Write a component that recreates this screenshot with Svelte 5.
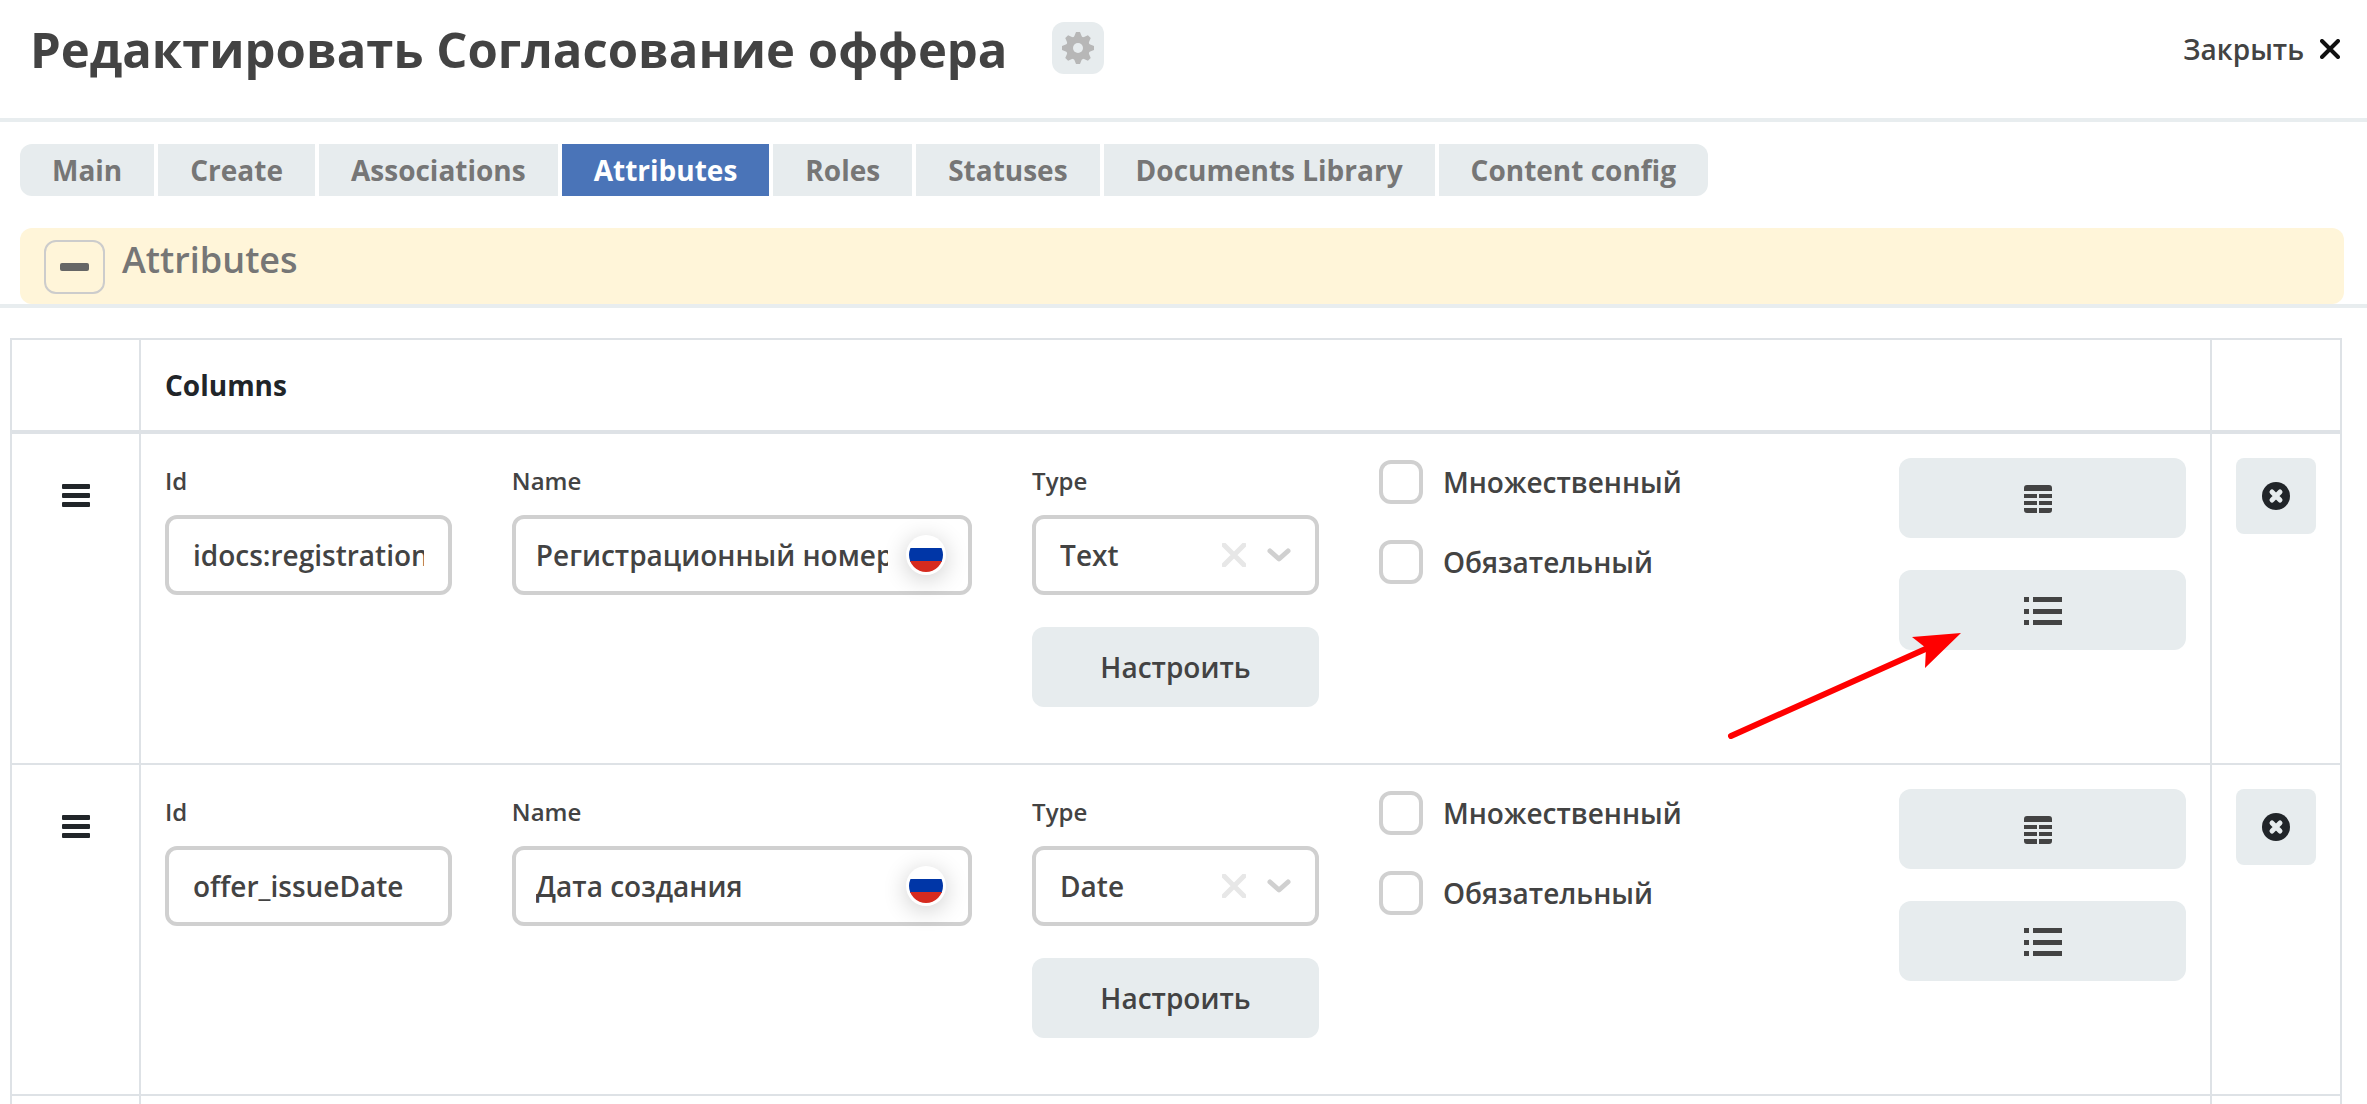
<script>
  const tabs = ['Main', 'Create', 'Associations', 'Attributes', 'Roles', 'Statuses', 'Documents Library', 'Content config'];
  let active = $state('Attributes');
  let rows = $state([
    { id: 'idocs:registrationNumber', name: 'Регистрационный номер', type: 'Text', hint: true },
    { id: 'offer_issueDate', name: 'Дата создания', type: 'Date', hint: false }
  ]);
</script>

<div class="page">
  <header>
    <h1>Редактировать Согласование оффера</h1>
    <button class="gear" aria-label="Settings">
      <svg width="32" height="32" viewBox="-16 -16 32 32" fill="#b7b7b7">
        <circle r="12" />
        {#each [0, 45, 90, 135] as angle}
          <path d="M-2 -16h4l2 5v22l-2 5h-4l-2 -5v-22z" transform="rotate({angle})" />
        {/each}
        <circle r="5" fill="#e7ecee" />
      </svg>
    </button>
    <button class="close">
      Закрыть
      <svg width="20" height="20" viewBox="0 0 20 20"><path d="M2 2l16 16M18 2L2 18" stroke="#111" stroke-width="4" stroke-linecap="round" /></svg>
    </button>
  </header>

  <nav>
    {#each tabs as tab}
      <button class="tab" class:active={tab === active} onclick={() => (active = tab)}>{tab}</button>
    {/each}
  </nav>

  <section class="panel">
    <div class="panel-bar">
      <button class="collapse" aria-label="Collapse">
        <svg width="29" height="8" viewBox="0 0 29 8"><rect width="29" height="8" rx="2" fill="#666" /></svg>
      </button>
      <h2>Attributes</h2>
    </div>
  </section>

  <div class="table-wrap">
    <table>
      <colgroup><col class="edge-left" /><col /><col class="edge-right" /></colgroup>
      <thead>
        <tr><th></th><th>Columns</th><th></th></tr>
      </thead>
      <tbody>
        {#each rows as row, i}
          <tr>
            <td>
              <div class="drag">
                <svg width="28" height="23" viewBox="0 0 28 23" fill="#212529">
                  <rect width="28" height="5" rx="1" /><rect y="9" width="28" height="5" rx="1" /><rect y="18" width="28" height="5" rx="1" />
                </svg>
              </div>
            </td>
            <td>
              <div class="fields">
                <div class="narrow">
                  <label class="caption" for="id-{i}">Id</label>
                  <input class="box" id="id-{i}" type="text" bind:value={row.id} />
                </div>
                <div class="wide">
                  <label class="caption" for="name-{i}">Name</label>
                  <div class="control">
                    <input class="box localized" id="name-{i}" type="text" bind:value={row.name} />
                    <button class="flag" aria-label="Русский">
                      <svg width="34" height="34" viewBox="0 0 34 34">
                        <clipPath id="round-{i}"><circle cx="17" cy="17" r="17" /></clipPath>
                        <g clip-path="url(#round-{i})">
                          <rect width="34" height="10" fill="#fff" /><rect y="10" width="34" height="14" fill="#0036a7" /><rect y="23" width="34" height="11" fill="#d62b1f" />
                        </g>
                      </svg>
                    </button>
                  </div>
                </div>
                <div class="narrow">
                  <label class="caption" for="type-{i}">Type</label>
                  <div class="control">
                    <select class="box" id="type-{i}" bind:value={row.type}>
                      <option>Text</option>
                      <option>Date</option>
                    </select>
                    <div class="indicators">
                      <button class="clear" aria-label="Clear">
                        <svg width="24" height="24" viewBox="0 0 24 24"><path d="M2 2l20 20M22 2L2 22" stroke="#e7e7e7" stroke-width="5" stroke-linecap="round" /></svg>
                      </button>
                      <svg width="24" height="14" viewBox="0 0 24 14"><path d="M3 3l9 8L21 3" fill="none" stroke="#d0d0d0" stroke-width="5" stroke-linecap="round" stroke-linejoin="round" /></svg>
                    </div>
                  </div>
                  <button class="action configure">Настроить</button>
                </div>
                <div class="wide checks">
                  <label><input type="checkbox" />Множественный</label>
                  <label><input type="checkbox" />Обязательный</label>
                </div>
                <div class="narrow actions">
                  <button class="action icon" aria-label="Table">
                    <svg width="38" height="28" viewBox="0 0 38 28" fill="#434343">
                      <path d="M3 0h22a3 3 0 0 1 3 3v3H0V3a3 3 0 0 1 3-3zM0 9h13v4H0zM15 9h13v4H15zM0 16h13v4H0zM15 16h13v4H15zM0 23h13v5H3a3 3 0 0 1-3-3zM15 23h13v2a3 3 0 0 1-3 3H15z" />
                    </svg>
                  </button>
                  <div class="control">
                    <button class="action icon" aria-label="List">
                      <svg width="38" height="28" viewBox="0 0 38 28" fill="#434343">
                        <path d="M0 0h5v5H0zM9 0h29v5H9zM0 12h5v5H0zM9 12h29v5H9zM0 23h5v5H0zM9 23h29v5H9z" />
                      </svg>
                    </button>
                    {#if row.hint}
                      <svg class="arrow" width="240" height="114" viewBox="0 0 240 114">
                        <path d="M7 108L206 19" stroke="#f00" stroke-width="6" stroke-linecap="round" />
                        <path d="M237 5L188 9l14 11-1 20z" fill="#f00" />
                      </svg>
                    {/if}
                  </div>
                </div>
              </div>
            </td>
            <td>
              <button class="remove" aria-label="Remove">
                <svg width="28" height="28" viewBox="0 0 28 28">
                  <circle cx="14" cy="14" r="14" fill="#212529" />
                  <path d="M10 10l8 8M18 10l-8 8" stroke="#e7ecee" stroke-width="5" stroke-linecap="round" />
                </svg>
              </button>
            </td>
          </tr>
        {/each}
        <tr><td></td><td></td><td></td></tr>
      </tbody>
    </table>
  </div>
</div>

<style>
  :global(body) { margin: 0; background: #fff; }
  .page {
    height: 100vh;
    overflow: hidden;
    font-family: 'Open Sans', 'Noto Sans', sans-serif;
    font-size: 28px;
    font-weight: 600;
    line-height: 42px;
    color: #434343;
  }
  * { box-sizing: border-box; }
  button, input, select { font: inherit; color: inherit; margin: 0; }
  button { border: 0; padding: 0; background: none; cursor: pointer; }
  svg { display: block; }

  header {
    display: flex;
    align-items: flex-start;
    padding: 14px 27px 34px 30px;
    border-bottom: 4px solid #e8edef;
  }
  h1 { margin: 0; font-size: 49px; line-height: 70px; font-weight: 700; }
  .gear {
    display: grid;
    place-items: center;
    width: 52px;
    height: 52px;
    margin: 8px 0 0 45px;
    border-radius: 12px;
    background: #e7ecee;
  }
  .close { display: flex; align-items: center; gap: 16px; margin: 14px 0 0 auto; }

  nav { display: flex; gap: 4px; padding: 22px 20px 32px; }
  .tab {
    height: 52px;
    padding: 0 32px;
    background: #e7ecee;
    color: #767676;
    font-weight: 700;
  }
  .tab:first-child { border-radius: 12px 0 0 12px; }
  .tab:last-child { border-radius: 0 12px 12px 0; }
  .tab.active { background: #4a74b8; color: #fff; }

  .panel { padding: 0 23px 0 20px; border-bottom: 4px solid #e8edef; }
  .panel-bar {
    display: flex;
    align-items: flex-start;
    gap: 17px;
    height: 76px;
    padding: 12px 24px 0;
    border-radius: 12px;
    background: #fff5d9;
  }
  .collapse {
    display: grid;
    place-items: center;
    width: 61px;
    height: 54px;
    border: 2px solid #ccc;
    border-radius: 12px;
  }
  h2 { margin: 0; font-size: 36px; line-height: 40px; font-weight: 600; color: #767676; }

  .table-wrap { padding: 30px 25px 0 10px; }
  table {
    width: 100%;
    table-layout: fixed;
    border: 0 solid #dee2e6;
    border-width: 2px 0 0 2px;
    border-spacing: 0;
  }
  .edge-left { width: 129px; }
  .edge-right { width: 130px; }
  th, td {
    padding: 24px;
    border: 0 solid #dee2e6;
    border-width: 0 2px 2px 0;
    text-align: left;
    vertical-align: top;
  }
  th { border-bottom-width: 4px; font-weight: 700; color: #212529; }

  .drag { padding: 26px; }
  .fields {
    display: grid;
    grid-template-columns: repeat(12, minmax(0, 1fr));
    column-gap: 60px;
    min-height: 281px;
  }
  .narrow { grid-column: span 2; }
  .wide { grid-column: span 3; }
  .caption { display: block; padding: 5px 0 16px; font-size: 24px; line-height: 36px; }
  .control { position: relative; }
  .box {
    display: block;
    width: 100%;
    height: 80px;
    padding: 0 24px;
    border: 4px solid #d0d0d0;
    border-radius: 12px;
    background: #fff;
    appearance: none;
    outline: 0;
  }
  .localized { padding: 0 80px 0 20px; }
  .flag {
    position: absolute;
    top: 20px;
    right: 26px;
    display: grid;
    place-items: center;
    width: 40px;
    height: 40px;
    border-radius: 50%;
    background: #fff;
    box-shadow: 0 4px 24px rgba(0, 0, 0, 0.2);
  }
  .indicators {
    position: absolute;
    top: 0;
    right: 28px;
    display: flex;
    align-items: center;
    gap: 21px;
    height: 80px;
    pointer-events: none;
  }
  .clear { pointer-events: auto; }
  .action {
    display: grid;
    place-items: center;
    width: 100%;
    height: 80px;
    border-radius: 12px;
    background: #e7ecee;
  }
  .action.icon { padding-top: 2px; }
  .configure { margin-top: 32px; }
  .checks { display: flex; flex-direction: column; gap: 36px; padding-top: 2px; }
  .checks label { display: flex; align-items: center; gap: 20px; height: 44px; }
  .checks input {
    width: 44px;
    height: 44px;
    border: 4px solid #d0d0d0;
    border-radius: 12px;
    appearance: none;
  }
  .actions { display: flex; flex-direction: column; gap: 32px; }
  .arrow { position: absolute; top: 58px; left: -175px; pointer-events: none; }
  .remove {
    display: grid;
    place-items: center;
    width: 80px;
    height: 76px;
    border-radius: 8px;
    background: #e7ecee;
  }
</style>
